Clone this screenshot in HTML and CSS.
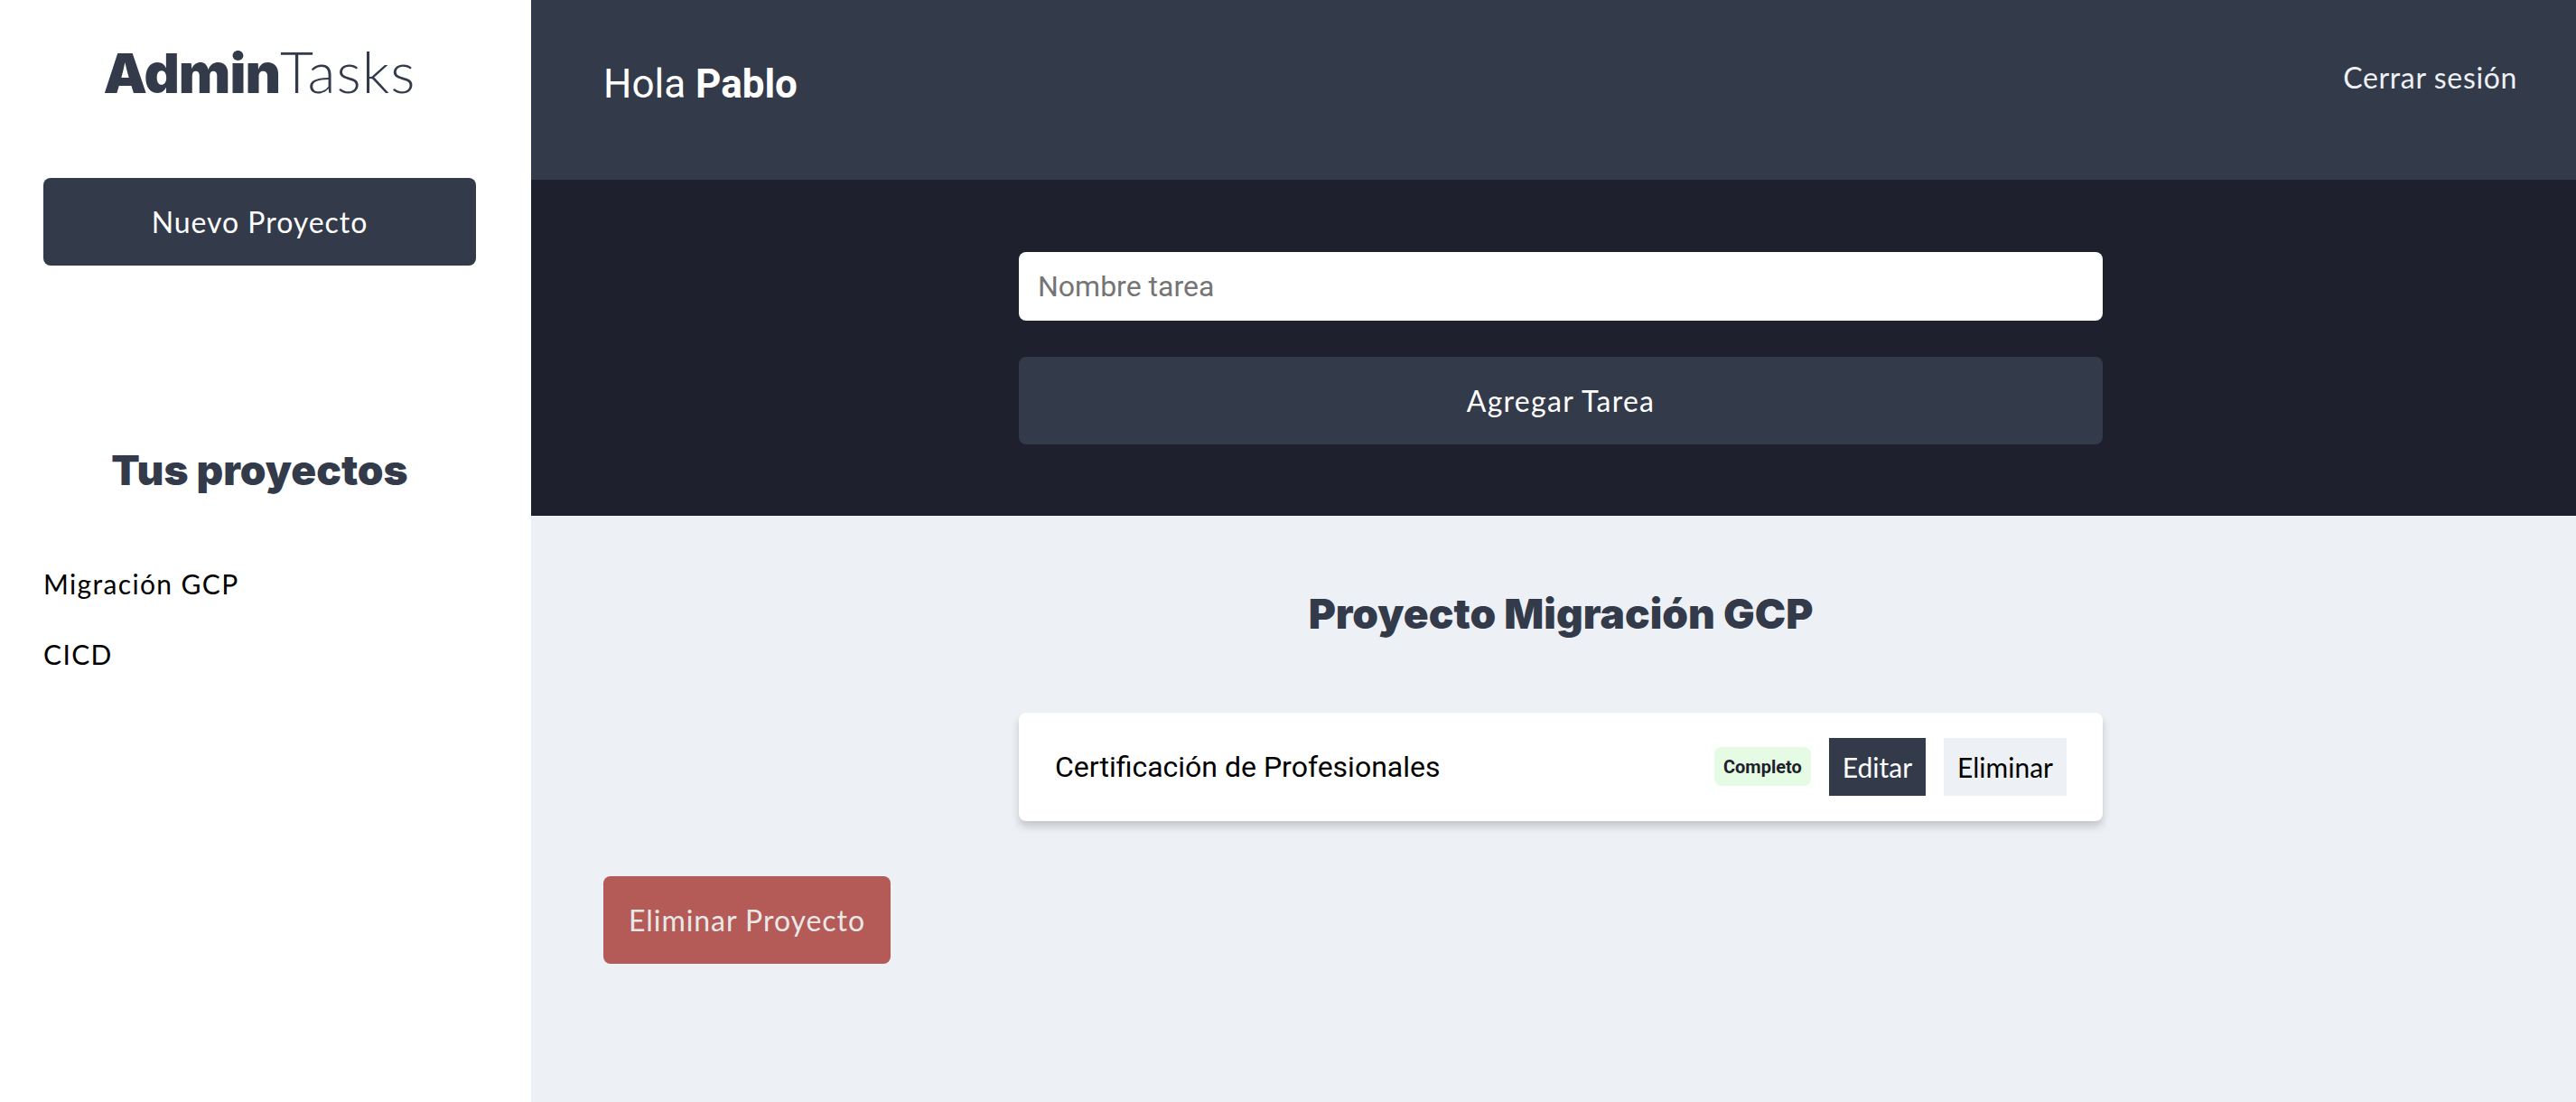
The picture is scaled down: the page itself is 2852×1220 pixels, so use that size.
FILE: index.html
```html
<!DOCTYPE html>
<html lang="es">
<head>
<meta charset="utf-8">
<title>AdminTasks</title>
<link rel="stylesheet" href="styles.css">
</head>
<body>
<div class="app">
  <aside class="sidebar">
    <h1 class="logo"><span class="logo-bold">Admin</span><span class="logo-light">Tasks</span></h1>
    <button class="btn-nuevo" type="button">Nuevo Proyecto</button>
    <h2 class="sidebar-title">Tus proyectos</h2>
    <ul class="proyectos">
      <li><a href="#" class="proyecto-link">Migración GCP</a></li>
      <li><a href="#" class="proyecto-link">CICD</a></li>
    </ul>
  </aside>
  <main class="main">
    <header class="topbar">
      <p class="saludo">Hola <strong>Pablo</strong></p>
      <a href="#" class="cerrar">Cerrar sesión</a>
    </header>
    <section class="form-section">
      <form class="form-tarea">
        <input class="input-tarea" type="text" placeholder="Nombre tarea">
        <button class="btn-agregar" type="button">Agregar Tarea</button>
      </form>
    </section>
    <section class="contenido">
      <div class="tareas">
        <h2 class="titulo-proyecto">Proyecto Migración GCP</h2>
        <ul class="lista-tareas">
          <li class="tarea">
            <span class="tarea-nombre">Certificación de Profesionales</span>
            <div class="tarea-acciones">
              <span class="estado">Completo</span>
              <button class="btn-editar" type="button">Editar</button>
              <button class="btn-eliminar" type="button">Eliminar</button>
            </div>
          </li>
        </ul>
      </div>
      <button class="btn-eliminar-proyecto" type="button">Eliminar Proyecto</button>
    </section>
  </main>
</div>
</body>
</html>
```

FILE: styles.css
```css
* { box-sizing: border-box; }

html, body {
  margin: 0;
  padding: 0;
  height: 100%;
}

body {
  font-family: Lato, "Liberation Sans", sans-serif;
  background: #edf0f5;
  color: #333a4a;
}

.app {
  display: flex;
  min-height: 1220px;
}

/* Sidebar */
.sidebar {
  width: 588px;
  flex: 0 0 588px;
  background: #ffffff;
  padding: 41px 61px 40px 48px;
}

.logo {
  margin: 0;
  text-align: center;
  font-size: 64px;
  line-height: 1.2;
  color: #333a4a;
  white-space: nowrap;
}

.logo-bold {
  font-family: Inter, Lato, sans-serif;
  font-weight: 900;
  font-size: 61px;
  letter-spacing: -1px;
}

.logo-light {
  font-weight: 300;
  letter-spacing: 1px;
}

.btn-nuevo {
  display: block;
  width: 479px;
  height: 97px;
  margin-top: 79px;
  border: none;
  border-radius: 8px;
  background: #333a4a;
  color: #ffffff;
  font-family: Lato, "Liberation Sans", sans-serif;
  font-size: 32px;
  font-weight: 400;
  letter-spacing: 0.03em;
}

.sidebar-title {
  margin: 198px 0 0;
  text-align: center;
  font-family: Inter, Lato, sans-serif;
  font-size: 46px;
  font-weight: 900;
  line-height: 1.25;
  letter-spacing: 0;
  color: #333a4a;
}

.proyectos {
  list-style: none;
  margin: 78px 0 0;
  padding: 0;
}

.proyectos li {
  margin-bottom: 42px;
}

.proyecto-link {
  display: block;
  font-size: 30px;
  line-height: 36px;
  letter-spacing: 0.045em;
  color: #000000;
  text-decoration: none;
}

/* Main */
.main {
  flex: 1;
  display: flex;
  flex-direction: column;
  background: #edf0f5;
}

.topbar {
  height: 199px;
  background: #333a4a;
  display: flex;
  justify-content: space-between;
  align-items: flex-start;
  padding: 67px 65px 0 80px;
}

.saludo {
  margin: 0;
  font-family: Roboto, "Liberation Sans", sans-serif;
  font-size: 44px;
  font-weight: 400;
  color: #ffffff;
  line-height: normal;
}

.saludo strong { font-weight: 700; }

.cerrar {
  font-size: 32px;
  line-height: 1.2;
  letter-spacing: 0.02em;
  color: #edf0f5;
  text-decoration: none;
}

.form-section {
  background: #1e212d;
  padding: 80px 80px 79px;
}

.form-tarea {
  width: 1216px;
  margin: 0 auto;
  padding-left: 16px;
  display: flex;
  flex-direction: column;
  gap: 40px;
}

.input-tarea {
  display: block;
  width: 100%;
  height: 76px;
  border: none;
  border-radius: 8px;
  background: #ffffff;
  padding: 0 21px;
  font-family: Roboto, "Liberation Sans", sans-serif;
  font-size: 32px;
  color: #000;
  outline: none;
}

.input-tarea::placeholder { color: #757575; }

.btn-agregar {
  display: block;
  width: 100%;
  height: 97px;
  border: none;
  border-radius: 8px;
  background: #333a4a;
  color: #ffffff;
  font-family: Lato, "Liberation Sans", sans-serif;
  font-size: 32px;
  letter-spacing: 0.04em;
}

.contenido {
  padding: 0 80px 80px;
}

.tareas {
  width: 1216px;
  margin: 0 auto;
  padding-left: 16px;
}

.titulo-proyecto {
  margin: 80px 0 0;
  text-align: center;
  font-family: Inter, Lato, sans-serif;
  font-size: 46px;
  font-weight: 900;
  line-height: 1.25;
  letter-spacing: 0;
  color: #333a4a;
}

.lista-tareas {
  list-style: none;
  margin: 80px 0 0;
  padding: 0;
}

.tarea {
  height: 120px;
  background: #ffffff;
  border-radius: 8px;
  box-shadow: 0 6px 10px rgba(0, 0, 0, 0.18);
  display: flex;
  align-items: center;
  justify-content: space-between;
  padding: 0 40px;
}

.tarea-nombre {
  font-family: Roboto, "Liberation Sans", sans-serif;
  font-size: 32px;
  color: #000000;
}

.tarea-acciones {
  display: flex;
  align-items: center;
  gap: 20px;
}

.estado {
  display: inline-flex;
  align-items: center;
  height: 43px;
  padding: 0 10px;
  border-radius: 8px;
  background: #e6fbe3;
  font-family: Roboto, "Liberation Sans", sans-serif;
  font-size: 20px;
  font-weight: 700;
  color: #1e212d;
}

.btn-editar,
.btn-eliminar {
  height: 64px;
  border: none;
  padding: 0 15px;
  font-family: Lato, "Liberation Sans", sans-serif;
  font-size: 30px;
}

.btn-editar {
  background: #333a4a;
  color: #ffffff;
}

.btn-eliminar {
  background: #edf0f5;
  color: #000000;
}

.btn-eliminar-proyecto {
  display: block;
  width: 318px;
  height: 97px;
  margin-top: 61px;
  border: none;
  border-radius: 8px;
  background: #b45a57;
  color: #e8e8e8;
  font-family: Lato, "Liberation Sans", sans-serif;
  font-size: 32px;
  letter-spacing: 0.03em;
}
```
